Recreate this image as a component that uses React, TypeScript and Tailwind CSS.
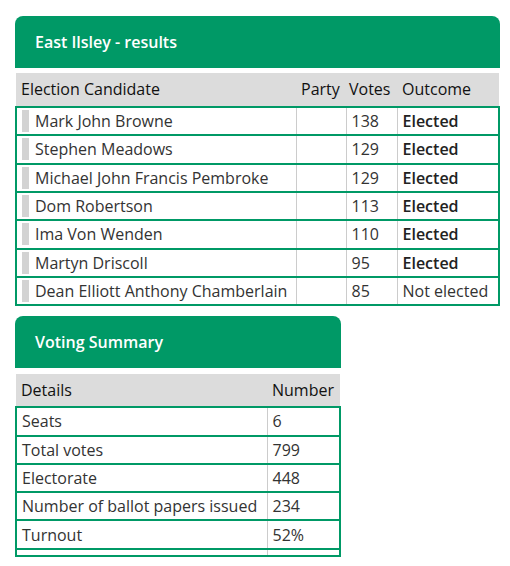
import React from 'react';

interface Candidate {
  name: string;
  party: string;
  votes: number;
  elected: boolean;
}

const candidates: Candidate[] = [
  { name: 'Mark John Browne', party: '', votes: 138, elected: true },
  { name: 'Stephen Meadows', party: '', votes: 129, elected: true },
  { name: 'Michael John Francis Pembroke', party: '', votes: 129, elected: true },
  { name: 'Dom Robertson', party: '', votes: 113, elected: true },
  { name: 'Ima Von Wenden', party: '', votes: 110, elected: true },
  { name: 'Martyn Driscoll', party: '', votes: 95, elected: true },
  { name: 'Dean Elliott Anthony Chamberlain', party: '', votes: 85, elected: false },
];

const summary = [
  { label: 'Seats', value: '6' },
  { label: 'Total votes', value: '799' },
  { label: 'Electorate', value: '448' },
  { label: 'Number of ballot papers issued', value: '234' },
  { label: 'Turnout', value: '52%' },
];

const Banner = ({ title }: { title: string }) => (
  <div className="h-[52px] rounded-t-lg bg-[#009966] pl-5 flex items-center">
    <h2 className="text-white font-semibold text-base">{title}</h2>
  </div>
);

export default function App() {
  return (
    <div
      className="pt-4 pl-[15px] pb-4 bg-white text-[#333] text-base"
      style={{ fontFamily: '"Open Sans", "Liberation Sans", sans-serif' }}
    >
      {/* Results */}
      <section className="w-[485px]">
        <Banner title="East Ilsley - results" />
        <table className="mt-[5px] w-full table-fixed border-collapse">
          <colgroup>
            <col className="w-[280px]" />
            <col className="w-[50px]" />
            <col className="w-[51px]" />
            <col />
          </colgroup>
          <thead>
            <tr className="bg-[#dcdcdc] text-[#111]">
              <th className="h-[34px] pb-[2px] pl-[5px] text-left font-normal">Election Candidate</th>
              <th className="h-[34px] pb-[2px] pl-[5px] text-left font-normal">Party</th>
              <th className="h-[34px] pb-[2px] pl-[3px] text-left font-normal">Votes</th>
              <th className="h-[34px] pb-[2px] pl-[5px] text-left font-normal">Outcome</th>
            </tr>
          </thead>
          <tbody>
            {candidates.map((c) => (
              <tr key={c.name} className="border-2 border-[#009966]">
                <td className="h-[28.33px] p-0">
                  <div className="flex items-center">
                    <span className="ml-[5px] mr-[6px] inline-block w-[7px] h-[22px] bg-[#d3d3d3]" />
                    <span className="leading-[26px] whitespace-nowrap">{c.name}</span>
                  </div>
                </td>
                <td className="p-0 pl-[5px] border-l border-[#cccccc]">{c.party}</td>
                <td className="p-0 pl-[5px] border-l border-[#cccccc]">{c.votes}</td>
                <td
                  className={
                    c.elected
                      ? 'p-0 pl-[5px] border-l border-[#cccccc] font-semibold text-[#222]'
                      : 'p-0 pl-[5px] border-l border-[#cccccc]'
                  }
                >
                  {c.elected ? 'Elected' : 'Not elected'}
                </td>
              </tr>
            ))}
          </tbody>
        </table>
      </section>

      {/* Voting summary */}
      <section className="mt-[10px] w-[326px]">
        <Banner title="Voting Summary" />
        <table className="mt-[6px] w-full table-fixed border-collapse">
          <colgroup>
            <col className="w-[251px]" />
            <col />
          </colgroup>
          <thead>
            <tr className="bg-[#dcdcdc] text-[#111]">
              <th className="h-[33px] pb-[1px] pl-[5px] text-left font-normal">Details</th>
              <th className="h-[33px] pb-[1px] pl-[5px] text-left font-normal">Number</th>
            </tr>
          </thead>
          <tbody>
            {summary.map((s) => (
              <tr key={s.label} className="border-2 border-[#009966]">
                <td className="h-[28.3px] p-0 pl-[5px] whitespace-nowrap">{s.label}</td>
                <td className="p-0 pl-[5px] border-l border-[#cccccc]">{s.value}</td>
              </tr>
            ))}
            <tr className="border-2 border-[#009966]">
              <td className="h-[7.5px] p-0" />
              <td className="p-0 border-l border-[#cccccc]" />
            </tr>
          </tbody>
        </table>
      </section>
    </div>
  );
}
